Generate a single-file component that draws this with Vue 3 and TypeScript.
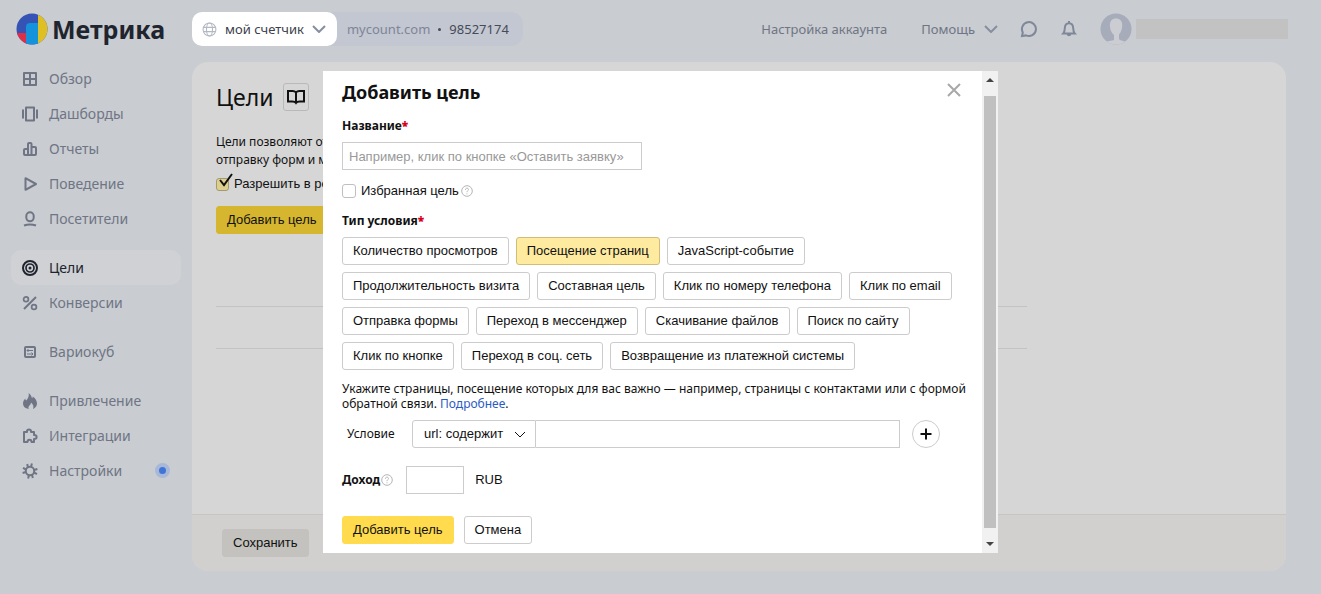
<script setup lang="ts">
import { ref } from 'vue'

interface NavItem {
  id: string
  label: string
  dot?: boolean
}

const navGroups: NavItem[][] = [
  [
    { id: 'overview', label: 'Обзор' },
    { id: 'dashboards', label: 'Дашборды' },
    { id: 'reports', label: 'Отчеты' },
    { id: 'behavior', label: 'Поведение' },
    { id: 'visitors', label: 'Посетители' },
  ],
  [
    { id: 'goals', label: 'Цели' },
    { id: 'conversions', label: 'Конверсии' },
  ],
  [{ id: 'variocube', label: 'Вариокуб' }],
  [
    { id: 'acquisition', label: 'Привлечение' },
    { id: 'integrations', label: 'Интеграции' },
    { id: 'settings', label: 'Настройки', dot: true },
  ],
]

const goalTypes: string[] = [
  'Количество просмотров',
  'Посещение страниц',
  'JavaScript-событие',
  'Продолжительность визита',
  'Составная цель',
  'Клик по номеру телефона',
  'Клик по email',
  'Отправка формы',
  'Переход в мессенджер',
  'Скачивание файлов',
  'Поиск по сайту',
  'Клик по кнопке',
  'Переход в соц. сеть',
  'Возвращение из платежной системы',
]

const activeNav = ref('goals')
const selectedType = ref('Посещение страниц')
const goalName = ref('')
const favorite = ref(false)
const allowed = ref(true)
const urlValue = ref('')
const income = ref('')
</script>

<template>
  <div class="page">
    <header class="header">
      <a class="logo" href="#">
        <svg class="logo-mark" viewBox="0 0 32 32" aria-hidden="true">
          <defs>
            <clipPath id="disc"><circle cx="16" cy="16" r="15.5" /></clipPath>
          </defs>
          <g clip-path="url(#disc)">
            <rect width="32" height="32" fill="#3453b4" />
            <rect y="20" width="12" height="12" fill="#dc2f48" />
            <path d="M10 32V14a4 4 0 0 1 4-4h8v22z" fill="#1592dc" />
            <rect x="22" width="10" height="32" fill="#dfc024" />
          </g>
        </svg>
        <span>Метрика</span>
      </a>
      <div class="counter">
        <button class="counter-name" type="button">
          <svg class="globe" viewBox="0 0 14 14" aria-hidden="true">
            <circle cx="7" cy="7" r="6" />
            <ellipse cx="7" cy="7" rx="2.8" ry="6" />
            <path d="M1.3 5h11.4M1.3 9h11.4" />
          </svg>
          <span>мой счетчик</span>
          <svg class="chevron" viewBox="0 0 14 8" aria-hidden="true"><path d="M1 1l6 6 6-6" /></svg>
        </button>
        <span class="counter-info">
          <a href="#">mycount.com</a><i class="bullet"></i><span>98527174</span>
        </span>
      </div>
      <div class="tools">
        <a href="#">Настройка аккаунта</a>
        <button class="tool help" type="button">
          Помощь
          <svg class="chevron" viewBox="0 0 14 8" aria-hidden="true"><path d="M1 1l6 6 6-6" /></svg>
        </button>
        <button class="tool" type="button" aria-label="Сообщения">
          <svg class="tool-icon" viewBox="0 0 18 18"><path d="M2 16l.8-3.6A7 7 0 1 1 6 15.4z" /></svg>
        </button>
        <button class="tool" type="button" aria-label="Уведомления">
          <svg class="tool-icon" viewBox="0 0 18 18">
            <path d="M3.3 13.5c1.3-1.4 1.4-2.8 1.5-5.2C4.9 5 6.500 3.200 9 3.200s4.100 1.800 4.200 5.100c.1 2.400.2 3.800 1.500 5.200zM9 1v2M7.500 14a1.600 1.800 0 0 0 3 0" />
          </svg>
        </button>
        <div class="user">
          <svg class="avatar" viewBox="0 0 32 32" aria-hidden="true">
            <defs>
              <clipPath id="face"><circle cx="16" cy="16" r="15.500" /></clipPath>
            </defs>
            <g clip-path="url(#face)">
              <rect width="32" height="32" fill="#a7acba" />
              <path d="M16 5.500c4 0 6.400 2.600 6.200 7-.1 3.800-1.200 6.800-3.200 9v4.500c1 2 5 1.500 8 3.500v3H3v-3c4-1.500 9-1.500 11-2.500v-5c-2.500-2-4-5.500-4.100-9.500C9.800 8.100 12 5.500 16 5.500z" fill="#cbcdd2" />
            </g>
          </svg>
          <div class="user-name"></div>
        </div>
      </div>
    </header>

    <div class="body">
      <nav class="nav">
        <ul v-for="(group, gi) in navGroups" :key="gi" class="nav-group">
          <li v-for="item in group" :key="item.id">
            <a href="#" class="nav-item" :class="{ active: item.id === activeNav }" @click.prevent="activeNav = item.id">
              <svg class="nav-icon" viewBox="0 0 16 16" aria-hidden="true">
                <path v-if="item.id === 'overview'" d="M2 2h12v12H2zM8 2v12M2 8h12" />
                <path v-else-if="item.id === 'dashboards'" d="M4 1.500h8v13H4zM1 3.500v9M15 3.500v9" />
                <path v-else-if="item.id === 'reports'" d="M6 14V3q0-1 1-1h1.500q1 0 1 1v11M6 8H3q-1 0-1 1v4q0 1 1 1h10q1 0 1-1V7q0-1-1-1H9.500" />
                <path v-else-if="item.id === 'behavior'" d="M3.500 2.200v11.600L14 8z" />
                <template v-else-if="item.id === 'visitors'">
                  <rect x="4.300" y="1.300" width="7.400" height="9" rx="3.700" />
                  <path d="M2 14.500q6-2 12 0" />
                </template>
                <template v-else-if="item.id === 'goals'">
                  <circle cx="8" cy="8" r="7" />
                  <circle class="mid" cx="8" cy="8" r="4" />
                  <circle class="solid" cx="8" cy="8" r="1.500" />
                </template>
                <template v-else-if="item.id === 'conversions'">
                  <circle class="mid" cx="4" cy="4.300" r="2.400" />
                  <circle class="mid" cx="12" cy="12" r="2.400" />
                  <path d="M14 2L2 14" />
                </template>
                <template v-else-if="item.id === 'variocube'">
                  <rect x="3" y="3" width="10" height="10" rx="1" />
                  <path class="thin" d="M5 6.500h6M5 6.500l1.500-1.500M5 6.500l1.500 1.500M5 10h6M11 10l-1.500-1.500M11 10l-1.500 1.500" />
                </template>
                <path
                  v-else-if="item.id === 'acquisition'"
                  class="solid"
                  d="M6.700 0C8.500 1.500 9.800 3.300 10 5.500q.8-.8.800-2C13.500 5.500 15 8 15 10.500c0 2.500-1.500 4.500-4 5.500 1-2.500.2-4.500-2-6.500-.2 2-1 2.500-2 3.500-.8 1-.6 2-.2 3C3 15.500 1 13.500 1 10.500 1 8.500 2 7 3.200 5.500q.2 1.300 1 2C6 5.500 7.200 3 6.700 0z"
                />
                <path
                  v-else-if="item.id === 'integrations'"
                  d="M2 4h3c-.5-3.500 4.500-3.500 4 0h3v3c3.500 0 3.500 4 0 4v3H9.500c0-3-4-3-4 0H2z"
                />
                <template v-else>
                  <circle cx="8" cy="8" r="4.200" />
                  <path d="M9 4L9.900.6M12 7l3.400-1M12 9.500l3 1.600M10 11.500l.8 3.500M7 12l-.9 3.400M4 9L.6 10M4 6.500L1 4.900M6 4.500L5.200 1" />
                </template>
              </svg>
              <span>{{ item.label }}</span>
              <i v-if="item.dot" class="nav-dot"></i>
            </a>
          </li>
        </ul>
      </nav>

      <main class="panel">
        <div class="panel-content">
          <div class="panel-title">
            <h1>Цели</h1>
            <button class="book" type="button" aria-label="Справка">
              <svg viewBox="0 0 18 16">
                <path d="M9 3.500C8 2.200 6.800 2 5.500 2H1v10.500h4.500c1.500 0 2.600.3 3.500 1.500.9-1.200 2-1.500 3.500-1.500H17V2h-4.500C11.200 2 10 2.200 9 3.500zM9 3.500V14" />
              </svg>
            </button>
          </div>
          <p class="intro">Цели позволяют отс<br />отправку форм и м</p>
          <label class="allow">
            <input v-model="allowed" type="checkbox" />
            <svg v-if="allowed" class="tick" viewBox="0 0 16 16" aria-hidden="true"><path d="M3 7l4 5 8-11" /></svg>
            <span>Разрешить в рек</span>
          </label>
          <button class="btn yellow dimmed" type="button">Добавить цель</button>
          <div class="rows"><div></div></div>
        </div>
        <footer class="panel-footer">
          <button class="btn save" type="button">Сохранить</button>
        </footer>
      </main>
    </div>

    <div class="overlay">
      <section class="dialog" role="dialog" aria-labelledby="dialog-title">
        <form class="form" @submit.prevent>
          <div class="dialog-head">
            <h2 id="dialog-title">Добавить цель</h2>
            <button class="close" type="button" aria-label="Закрыть">
              <svg viewBox="0 0 14 14"><path d="M1 1l12 12M13 1L1 13" /></svg>
            </button>
          </div>

          <label class="caption" for="goal-name">Название<b>*</b></label>
          <input id="goal-name" v-model="goalName" class="field name" type="text" placeholder="Например, клик по кнопке «Оставить заявку»" />

          <div class="favorite">
            <label><input v-model="favorite" type="checkbox" />Избранная цель</label>
            <svg class="hint" viewBox="0 0 12 12" aria-hidden="true">
              <circle cx="6" cy="6" r="5.300" />
              <path d="M4.400 4.800C4.500 2.600 7.600 2.700 7.500 4.600 7.400 5.800 6 5.700 6 7.200M6 8.400v.9" />
            </svg>
          </div>

          <div id="types-caption" class="caption">Тип условия<b>*</b></div>
          <div class="types" role="group" aria-labelledby="types-caption">
            <button
              v-for="type in goalTypes"
              :key="type"
              class="btn"
              :class="{ selected: type === selectedType }"
              :aria-pressed="type === selectedType"
              type="button"
              @click="selectedType = type"
            >{{ type }}</button>
          </div>

          <p class="note">
            Укажите страницы, посещение которых для вас важно — например, страницы с контактами или с формой обратной связи. <a href="#">Подробнее</a>.
          </p>

          <div class="condition">
            <label for="match">Условие</label>
            <div class="select">
              <select id="match"><option>url: содержит</option></select>
              <svg viewBox="0 0 12 7" aria-hidden="true"><path d="M1 1l5 5 5-5" /></svg>
            </div>
            <input v-model="urlValue" class="field url" type="text" aria-label="Значение url" />
            <button class="plus" type="button" aria-label="Добавить условие">
              <svg viewBox="0 0 12 12"><path d="M6 .5v11M.5 6h11" /></svg>
            </button>
          </div>

          <div class="income">
            <label for="income">Доход</label>
            <svg class="hint" viewBox="0 0 12 12" aria-hidden="true">
              <circle cx="6" cy="6" r="5.300" />
              <path d="M4.400 4.800C4.500 2.600 7.600 2.700 7.500 4.600 7.400 5.800 6 5.700 6 7.200M6 8.400v.9" />
            </svg>
            <input id="income" v-model="income" class="field sum" type="text" />
            <span>RUB</span>
          </div>

          <div class="actions">
            <button class="btn yellow" type="submit">Добавить цель</button>
            <button class="btn" type="button">Отмена</button>
          </div>
        </form>
        <div class="scrollbar" aria-hidden="true">
          <svg viewBox="0 0 8 4"><path d="M0 4l4-4 4 4z" /></svg>
          <div class="thumb"></div>
          <svg viewBox="0 0 8 4"><path d="M0 0l4 4 4-4z" /></svg>
        </div>
      </section>
    </div>
  </div>
</template>

<style>
body {
  background: #c9ccd1;
}
</style>

<style scoped>
* {
  box-sizing: border-box;
}
.page {
  position: relative;
  min-height: 100vh;
  display: flex;
  flex-direction: column;
  overflow: hidden;
  background: #c9ccd1;
  color: #111;
  font: 13px/16px 'Liberation Sans', sans-serif;
}
button,
input,
select {
  font: inherit;
  color: inherit;
  margin: 0;
}
button {
  cursor: pointer;
}
a {
  color: inherit;
  text-decoration: none;
}
svg {
  display: block;
  flex: none;
  fill: none;
  stroke: currentColor;
}

.header {
  display: flex;
  align-items: center;
  height: 58px;
  padding-right: 33px;
  font: 13px/20px 'Noto Sans', sans-serif;
  color: #6f7584;
}
.logo {
  display: flex;
  align-items: center;
  gap: 4px;
  width: 192px;
  padding-left: 16px;
  font-size: 25px;
  line-height: 32px;
  font-weight: 700;
  color: #20242e;
}
.logo-mark {
  width: 32px;
  height: 32px;
  stroke: none;
}
.counter {
  display: flex;
  align-items: center;
  border-radius: 12px;
  background: #c3c7d1;
}
.counter-name {
  display: flex;
  align-items: center;
  gap: 8px;
  height: 34px;
  padding: 0 11px 0 10px;
  border: 0;
  border-radius: 10px;
  background: #fff;
  color: #3b404d;
}
.globe {
  width: 15px;
  height: 15px;
  color: #b4b8c2;
}
.chevron {
  width: 14px;
  height: 8px;
  stroke-width: 2;
  color: #868ea0;
}
.counter-info {
  display: flex;
  align-items: center;
  padding: 0 14px 0 10px;
  color: #454b59;
}
.counter-info a {
  color: #7d8598;
}
.bullet {
  width: 3px;
  height: 3px;
  margin: 0 8px;
  border-radius: 50%;
  background: #454b59;
}
.tools {
  display: flex;
  align-items: center;
  gap: 22px;
  margin-left: auto;
}
.tool {
  display: flex;
  align-items: center;
  padding: 0;
  border: 0;
  background: none;
}
.help {
  gap: 9px;
  margin-left: 12px;
}
.tool-icon {
  width: 18px;
  height: 18px;
  stroke-width: 2;
  color: #7f8799;
}
.user {
  display: flex;
  align-items: center;
  gap: 4px;
}
.avatar {
  width: 32px;
  height: 32px;
  stroke: none;
}
.user-name {
  width: 152px;
  height: 20px;
  background: #c2c2c2;
}

.body {
  flex: 1;
  display: flex;
}
.nav {
  display: flex;
  flex-direction: column;
  gap: 14px;
  width: 192px;
  padding: 3px 11px 0;
}
.nav-group {
  margin: 0;
  padding: 0;
  list-style: none;
}
.nav-item {
  display: flex;
  align-items: center;
  gap: 11px;
  height: 35px;
  padding: 0 11px;
  border-radius: 10px;
  font: 14px/20px 'Noto Sans', sans-serif;
  color: #6f7584;
}
.nav-item.active {
  background: #d0d1d5;
  color: #20242e;
}
.nav-icon {
  width: 16px;
  height: 16px;
  overflow: visible;
  stroke-width: 2;
  stroke-linejoin: round;
}
.nav-icon .solid {
  fill: currentColor;
  stroke: none;
}
.nav-icon .mid {
  stroke-width: 1.7;
}
.nav-icon .thin {
  stroke-width: 1;
}
.nav-dot {
  width: 15px;
  height: 15px;
  margin-left: auto;
  border: 4px solid #a9b8d6;
  border-radius: 50%;
  background: #3f74d8;
}

.panel {
  flex: 1;
  display: flex;
  flex-direction: column;
  min-width: 0;
  margin: 4px 35px 23px 0;
  border-radius: 16px;
  overflow: hidden;
  background: #d6d6d6;
}
.panel-content {
  flex: 1;
  padding: 20px 24px;
}
.panel-title {
  display: flex;
  align-items: center;
  gap: 10px;
  height: 30px;
}
h1 {
  margin: 0;
  font: 23px/30px 'Noto Sans', sans-serif;
}
.book {
  display: flex;
  padding: 5px 3px;
  border: 1px solid #b9b9b9;
  border-radius: 3px;
  background: none;
}
.book svg {
  width: 18px;
  height: 16px;
  stroke-width: 2;
}
.intro {
  margin: 21px 0 7px;
  line-height: 18px;
  font-family: 'Noto Sans', sans-serif;
  font-size: 12px;
  white-space: nowrap;
}
.allow {
  position: relative;
  display: flex;
  align-items: center;
  gap: 5px;
  margin-bottom: 14px;
  white-space: nowrap;
}
.allow input {
  appearance: none;
  width: 13px;
  height: 13px;
  border: 1px solid #a39a72;
  border-radius: 3px;
  background: #ddd08e;
}
.tick {
  position: absolute;
  left: 1px;
  bottom: 3px;
  width: 16px;
  height: 16px;
  stroke-width: 2;
}
.rows {
  width: 100%;
  max-width: 811px;
  margin-top: 72px;
  border: solid #c3c3c3;
  border-width: 1px 0;
}
.rows div {
  height: 41px;
}
.panel-footer {
  height: 57px;
  padding: 14px 30px;
  border-top: 1px solid #c6c5c4;
  background: #d1d0ce;
}

.btn {
  height: 28px;
  padding: 0 10px;
  border: 1px solid #ccc;
  border-radius: 3px;
  background: #fff;
  white-space: nowrap;
}
.btn.yellow {
  border-color: #ffdb4d;
  background: #ffdb4d;
}
.btn.dimmed {
  border-color: #d6b62e;
  background: #d6b62e;
}
.btn.selected {
  border-color: #d0bd78;
  background: #ffeba0;
}
.btn.save {
  border-color: #c3c2be;
  background: #c3c2be;
}

.overlay {
  position: absolute;
  inset: 0;
  display: flex;
  justify-content: center;
  align-items: flex-start;
  padding-top: 71px;
}
.dialog {
  display: flex;
  width: 675px;
  max-width: 100%;
  background: #fff;
}
.form {
  flex: 1;
  min-width: 0;
  padding: 8px 14px 9px 19px;
}
.dialog-head {
  display: flex;
  align-items: center;
  justify-content: space-between;
  padding-right: 7px;
}
h2 {
  margin: 0;
  font: 700 18px/26px 'Noto Sans', sans-serif;
}
.close {
  padding: 0 0 4px;
  border: 0;
  background: none;
  color: #a8a8a8;
}
.close svg {
  width: 14px;
  height: 14px;
  stroke-width: 2;
}
.caption {
  display: block;
  margin: 12px 0 7px;
  font: 700 12px/18px 'Noto Sans', sans-serif;
}
.caption b {
  color: #d8001b;
}
.field {
  display: block;
  height: 28px;
  padding: 0 6px;
  border: 1px solid #ccc;
  border-radius: 0;
  background: #fff;
}
.field::placeholder {
  color: #999;
}
.name {
  width: 300px;
}
.favorite {
  display: flex;
  align-items: center;
  gap: 2px;
  margin: 13px 0;
}
.favorite label {
  display: flex;
  align-items: center;
  gap: 5px;
}
.favorite input {
  appearance: none;
  width: 14px;
  height: 14px;
  border: 1px solid #bfbfbf;
  border-radius: 3px;
}
.hint {
  width: 12px;
  height: 12px;
  color: #b5b5b5;
}
.types {
  display: flex;
  flex-wrap: wrap;
  gap: 7px;
}
.note {
  margin: 11px 0 9px;
  font: 12px/15px 'Noto Sans', sans-serif;
}
.note a {
  color: #2a5bc4;
}
.condition {
  display: flex;
  align-items: center;
  padding: 0 28px 0 5px;
}
.condition label {
  width: 65px;
  font: 12px/16px 'Noto Sans', sans-serif;
}
.select {
  position: relative;
}
.select select {
  appearance: none;
  display: block;
  width: 124px;
  height: 28px;
  padding: 0 11px;
  border: 1px solid #ccc;
  border-radius: 3px 0 0 3px;
  background: #fff;
}
.select svg {
  position: absolute;
  right: 10px;
  top: 11px;
  width: 12px;
  height: 7px;
  pointer-events: none;
}
.url {
  flex: 1;
  min-width: 0;
  border-left: 0;
}
.plus {
  display: flex;
  align-items: center;
  justify-content: center;
  width: 28px;
  height: 28px;
  margin-left: 12px;
  padding: 0;
  border: 1px solid #ccc;
  border-radius: 50%;
  background: #fff;
}
.plus svg {
  width: 12px;
  height: 12px;
  stroke-width: 2;
}
.income {
  display: flex;
  align-items: center;
  margin-top: 18px;
}
.income label {
  margin-right: 1px;
  font: 700 12px/18px 'Noto Sans', sans-serif;
}
.sum {
  width: 58px;
  margin: 0 11px 0 13px;
}
.actions {
  display: flex;
  gap: 10px;
  margin-top: 22px;
}
.scrollbar {
  display: flex;
  flex-direction: column;
  align-items: center;
  gap: 14px;
  width: 16px;
  padding: 7px 0;
  background: #f1f1f1;
  color: #444;
}
.scrollbar svg {
  width: 8px;
  height: 4px;
  fill: currentColor;
  stroke: none;
}
.thumb {
  flex: 1;
  width: 12px;
  background: #c0c0c0;
}
</style>
